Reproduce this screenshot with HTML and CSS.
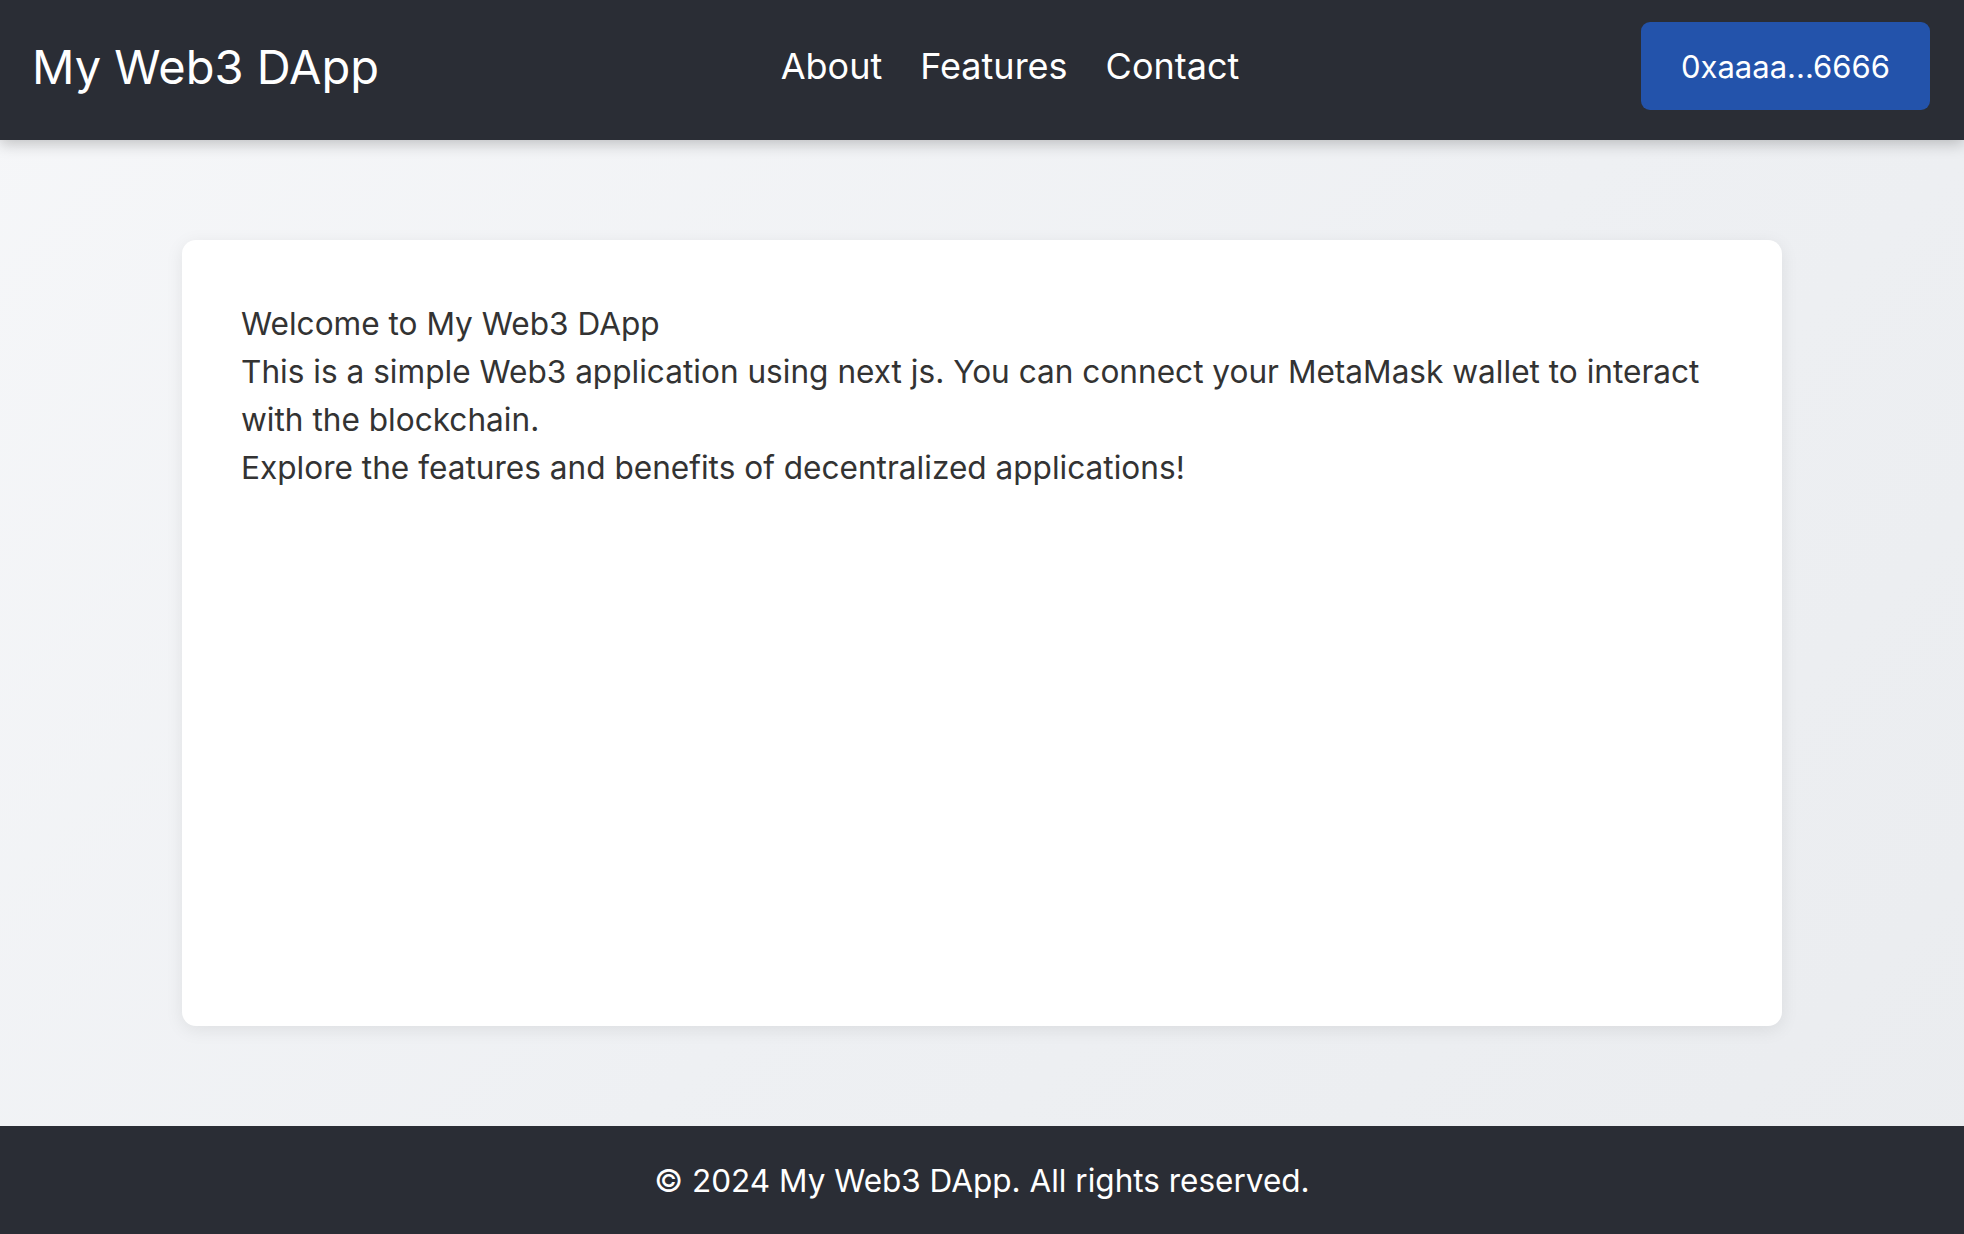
FILE: index.html
```html
<!DOCTYPE html>
<html lang="en">
<head>
<meta charset="utf-8">
<title>My Web3 DApp</title>
<link rel="stylesheet" href="styles.css">
</head>
<body>
  <header class="topbar">
    <div class="brand">My Web3 DApp</div>
    <nav class="nav">
      <a class="nav-link" href="#about">About</a>
      <a class="nav-link" href="#features">Features</a>
      <a class="nav-link" href="#contact">Contact</a>
    </nav>
    <button class="wallet-btn" type="button">0xaaaa...6666</button>
  </header>
  <main class="main">
    <section class="card">
      <p class="line">Welcome to My Web3 DApp</p>
      <p class="line">This is a simple Web3 application using next js. You can connect your MetaMask wallet to interact with the blockchain.</p>
      <p class="line">Explore the features and benefits of decentralized applications!</p>
    </section>
  </main>
  <footer class="footer">
    <p class="footer-text">© 2024 My Web3 DApp. All rights reserved.</p>
  </footer>
</body>
</html>
```

FILE: styles.css
```css
* { box-sizing: border-box; }

html, body {
  margin: 0;
  padding: 0;
}

body {
  min-height: 100vh;
  display: flex;
  flex-direction: column;
  font-family: Inter, "Liberation Sans", Arial, sans-serif;
  background: linear-gradient(135deg, #f6f7f9 0%, #eef0f3 55%, #eaecef 100%);
  color: #333;
}

.topbar {
  position: relative;
  z-index: 2;
  height: 140px;
  flex: 0 0 auto;
  display: flex;
  align-items: center;
  justify-content: space-between;
  padding: 0 34px 8px 32px;
  background: #2a2d35;
  box-shadow: 0 4px 14px rgba(0, 0, 0, 0.22);
}

.brand {
  color: #fff;
  font-size: 47px;
  font-weight: 400;
  line-height: 1;
}

.nav {
  display: flex;
  gap: 38px;
}

.nav-link {
  color: #fff;
  text-decoration: none;
  font-size: 36px;
  line-height: 1;
}

.wallet-btn {
  height: 88px;
  padding: 0 40px;
  border: none;
  border-radius: 9px;
  background: #2353ab;
  color: #fff;
  font-family: inherit;
  font-size: 31px;
  cursor: pointer;
}

.main {
  flex: 1 0 auto;
  display: flex;
  flex-direction: column;
  padding: 100px 0;
}

.card {
  flex: 1;
  width: 100%;
  max-width: 1600px;
  margin: 0 auto;
  padding: 60px 60px 60px 59px;
  background: #fff;
  border-radius: 14px;
  box-shadow: 0 4px 18px rgba(0, 0, 0, 0.08);
}

.line {
  margin: 0;
  font-size: 31.6px;
  line-height: 48px;
  color: #333;
}

.footer {
  flex: 0 0 auto;
  height: 108px;
  display: flex;
  align-items: center;
  justify-content: center;
  background: #2a2d35;
}

.footer-text {
  margin: 0;
  color: #fff;
  font-size: 31.5px;
}
```
